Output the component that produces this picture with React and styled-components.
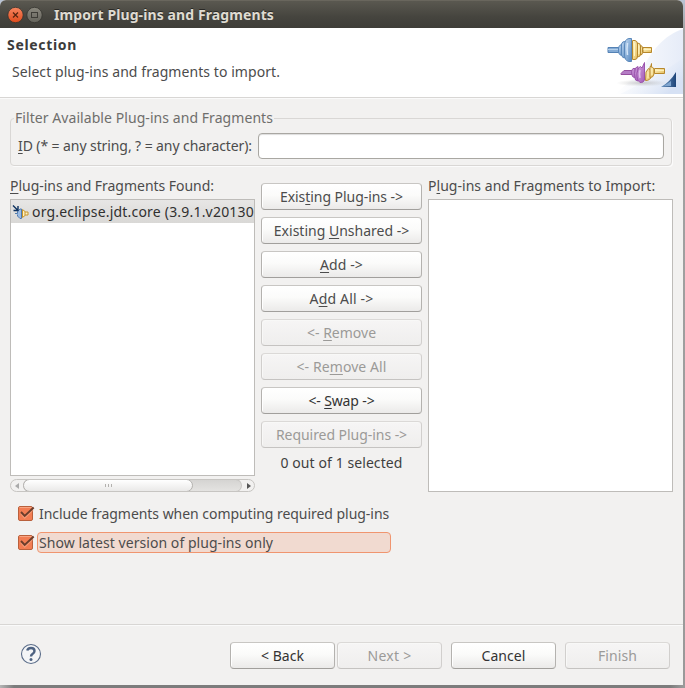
import React from 'react';
import styled, { createGlobalStyle } from 'styled-components';

const GlobalStyle = createGlobalStyle`
  * { box-sizing: border-box; }
  body {
    margin: 0;
    background: #c9c7c4;
    color: #4c4c4c;
    font: 14px/20px "Noto Sans", "Open Sans", sans-serif;
    overflow: hidden;
  }
  u { text-decoration-thickness: 1px; text-underline-offset: 2px; text-decoration-skip-ink: none; }
`;

const Desktop = styled.div`
  width: 685px;
  height: 688px;
  padding: 0 2px 3px 0;
  background:
    linear-gradient(#b9c3d4 0, #a3a3a3 30px, #999 100%) 683px 0 / 2px 685px no-repeat,
    linear-gradient(90deg, #b5b5b5 0, #7c7c7c 14px, #7c7c7c 670px, #9a9a9a 683px) 0 100% / 100% 3px no-repeat,
    #b9c3d4;
`;

const Window = styled.div`
  width: 683px;
  height: 685px;
  display: flex;
  flex-direction: column;
  background: #f2f1f0;
  border-radius: 6px 6px 0 0;
  overflow: hidden;
`;

const Text = styled.span`
  letter-spacing: ${(p) => p.$spacing || 0}px;
  white-space: nowrap;
`;

const TitleBar = styled.header`
  flex: none;
  height: 28px;
  display: flex;
  align-items: center;
  padding: 0 0 0 7px;
  background: linear-gradient(#5a5850, #45443e 60%, #3e3d38);
  border-top: 1px solid #69665d;
  color: #dfdbd2;
  font-weight: bold;
  text-shadow: 0 -1px 0 #2a2925;
`;

const WindowControls = styled.svg`
  flex: none;
  width: 36px;
  height: 18px;
  margin-right: 11px;
`;

const Banner = styled.section`
  flex: none;
  height: 70px;
  display: flex;
  justify-content: space-between;
  background: #fff;
  border-bottom: 1px solid #d8d6d4;
`;

const BannerText = styled.div`
  display: flex;
  flex-direction: column;
  gap: 7px;
  padding: 7px 0 0 7px;
`;

const Heading = styled.h1`
  margin: 0;
  font-size: 14px;
  line-height: 20px;
  color: #3c3c3c;
`;

const Description = styled.p`
  margin: 0 0 0 5px;
`;

const BannerArt = styled.svg`
  width: 83px;
  height: 66px;
`;

const Body = styled.main`
  height: 526px;
  padding: 13px 10px 0;
  border-top: 1px solid #fafafa;
`;

const Group = styled.fieldset`
  height: 57px;
  margin: -3px 0 0;
  min-width: 0;
  width: 662px;
  padding: 6px 7px 0 6px;
  border: 1px solid #d9d7d5;
  border-radius: 4px;
  box-shadow: 1px 1px 0 #fbfbfb;
`;

const Legend = styled.legend`
  margin-left: -3px;
  padding: 0 1px;
  height: 18px;
  line-height: 18px;
  color: #6f6e6c;
`;

const Field = styled.label`
  display: flex;
  align-items: center;
  justify-content: space-between;
  padding-left: 1px;
`;

const Input = styled.input`
  width: 406px;
  height: 26px;
  padding: 0 6px;
  border: 1px solid #a9a7a2;
  border-radius: 4px;
  background: #fff;
  box-shadow: inset 0 1px 1px #ddd;
  outline: none;
`;

const Picker = styled.div`
  display: flex;
  align-items: flex-start;
  margin-top: 10px;
  height: 317px;
`;

const Column = styled.div`
  display: flex;
  flex-direction: column;
  width: 245px;
`;

const ColumnLabel = styled.div`
  height: 23px;
  line-height: 20px;
`;

const List = styled.div`
  height: ${(p) => p.$height}px;
  border: 1px solid #bebcb9;
  background: #fff;
  overflow: hidden;
`;

const ListItem = styled.div`
  display: flex;
  align-items: center;
  height: 23px;
  padding-left: 1px;
  gap: 3px;
  background: linear-gradient(#e7e6e5, #d9d8d6);
  color: #303030;
  overflow: hidden;
`;

const PluginIcon = styled.svg`
  flex: none;
  width: 17px;
  height: 16px;
`;

const ScrollBar = styled.div`
  display: flex;
  align-items: stretch;
  height: 13px;
  margin-top: 3px;
  border: 1px solid #c7c5c2;
  border-radius: 7px;
  background: #f2f1f0;
  overflow: hidden;
`;

const ScrollArrow = styled.div`
  display: flex;
  align-items: center;
  justify-content: center;
  width: 12px;
  svg { width: 5px; height: 6px; fill: ${(p) => (p.$end ? '#555' : '#aaa')}; }
`;

const ScrollTrack = styled.div`
  flex: 1;
  display: flex;
  margin: -1px 0;
  border: 1px solid #c7c5c2;
  border-left: 0;
  border-radius: 7px;
  background: linear-gradient(#d5d4d2, #e4e3e1);
`;

const ScrollThumb = styled.div`
  display: flex;
  align-items: center;
  justify-content: center;
  gap: 2px;
  width: 170px;
  margin: -1px 0;
  border: 1px solid #b4b2af;
  border-radius: 7px;
  background: linear-gradient(#fff, #eae9e8);
`;

const Grip = styled.i`
  width: 1px;
  height: 3px;
  background: #b3b1ae;
`;

const Actions = styled.div`
  display: flex;
  flex-direction: column;
  align-items: stretch;
  gap: 7px;
  width: 161px;
  margin: 7px 6px 0;
`;

const Button = styled.button`
  display: flex;
  align-items: center;
  justify-content: center;
  width: ${(p) => p.$width || 161}px;
  height: 27px;
  padding: 0;
  font: inherit;
  border: 1px solid;
  border-color: #c8c6c3 #b4b2af #a19f9c;
  border-radius: 4px;
  background: linear-gradient(#fff, #fbfbfa 45%, #ebeae9);
  box-shadow: inset 1px 1px 0 #fff;
  color: ${(p) => (p.$dark ? '#333' : '#4c4c4c')};
  &:disabled {
    color: #9b9a98;
    border-color: #dbd9d7 #d1cfcd #c5c3c1;
    background: linear-gradient(#f6f5f5, #efeeed);
    box-shadow: inset 1px 1px 0 #f8f8f7;
  }
`;

const Status = styled.div`
  text-align: center;
  margin-top: -2px;
  color: #3f3f3f;
`;

const Options = styled.div`
  display: flex;
  flex-direction: column;
  gap: 8px;
  padding: 10px 0 0 8px;
`;

const CheckRow = styled.label`
  display: flex;
  align-items: center;
  gap: 2px;
  height: 21px;
`;

const CheckMark = styled.svg`
  flex: none;
  width: 17px;
  height: 17px;
`;

const CheckLabel = styled.span`
  display: flex;
  align-items: center;
  height: 21px;
  padding: 0 1px;
  border: 1px solid transparent;
  ${(p) => (p.$focused ? 'width: 354px; border-color: #f0956f; border-radius: 4px; background: #f1dad0;' : '')}
`;

const Footer = styled.footer`
  display: flex;
  align-items: flex-start;
  height: 61px;
  padding: 17px 13px 0 20px;
  border-top: 1px solid #d8d6d4;
  box-shadow: inset 0 1px 0 #fafafa;
`;

const HelpIcon = styled.svg`
  width: 22px;
  height: 22px;
  margin-top: 1px;
  margin-right: auto;
`;

const ButtonPair = styled.div`
  display: flex;
  gap: ${(p) => p.$gap}px;
  margin-left: 9px;
`;

function Check({ label, spacing, focused }) {
  return (
    <CheckRow>
      <CheckMark viewBox="0 0 17 17">
        <rect x=".5" y="1.5" width="14" height="14" rx="1.5" fill="#f27d53" stroke="#b9603c" />
        <path d="M1.5 2.5 H13.5" stroke="#f8a482" />
        <path d="M3 8.3 L6.7 12.6 L15 4.5" fill="none" stroke="#f9ae8d" strokeWidth="2" opacity=".6" />
        <path d="M3 7 L6.7 11 L15.7 2.5" fill="none" stroke="#6b3d2b" strokeWidth="1.9" />
      </CheckMark>
      <CheckLabel $focused={focused}><Text $spacing={spacing}>{label}</Text></CheckLabel>
    </CheckRow>
  );
}

function PlugArt() {
  return (
    <BannerArt viewBox="600 28 83 66">
      <defs>
        <linearGradient id="sky" x1="0" y1="0" x2="1" y2=".6">
          <stop offset="0.1" stopColor="#fff" stopOpacity="0" /><stop offset="1" stopColor="#d6e1f4" />
        </linearGradient>
        <linearGradient id="beam" x1="0" y1="0" x2="1" y2="0">
          <stop offset="0" stopColor="#fff" /><stop offset="1" stopColor="#e6ecf8" />
        </linearGradient>
        <linearGradient id="blue" x1="0" y1="0" x2="1" y2="1">
          <stop offset="0" stopColor="#c2d9f1" /><stop offset="1" stopColor="#5688c0" />
        </linearGradient>
        <linearGradient id="gold" x1="0" y1="0" x2="1" y2="1">
          <stop offset="0" stopColor="#fff6cd" /><stop offset="1" stopColor="#e5bd5a" />
        </linearGradient>
        <linearGradient id="violet" x1="0" y1="0" x2="1" y2="1">
          <stop offset="0" stopColor="#d2a6df" /><stop offset="1" stopColor="#a45bb8" />
        </linearGradient>
        <linearGradient id="corner" x1="0" y1="0" x2="1" y2="0">
          <stop offset="0" stopColor="#6c95c2" /><stop offset="1" stopColor="#1d4478" />
        </linearGradient>
        <radialGradient id="shade"><stop offset="0" stopColor="#aaa" /><stop offset="1" stopColor="#bbb" stopOpacity="0" /></radialGradient>
      </defs>
      <path d="M683 29 C664 35 650 52 642 71 L615 94 H683Z" fill="url(#beam)" />
      <path d="M683 58 Q662 74 620 94 H683Z" fill="url(#sky)" />
      <ellipse cx="642" cy="83" rx="26" ry="3.5" fill="url(#shade)" opacity=".6" />

      <path d="M608 47.5 H619 V52.5 H608Z" fill="#84abd5" stroke="#5482b5" />
      <path d="M608 49.5 H619" stroke="#b4cfea" />
      <g fill="url(#blue)" stroke="#5a88bb">
        <path d="M623 44.5 Q619.5 44 618.5 48 V52 Q619.5 56 623 55.5Z" />
        <path d="M626 41.5 Q622 41 621.5 44 V55 Q622 58.5 626 58Z" />
        <path d="M631.5 38.5 H629 Q624.5 39 624.5 46 V54 Q624.5 61 629 61.5 H631.5Z" />
      </g>
      <path d="M627.5 43 Q626.5 49 627.5 55" fill="none" stroke="#d5e6f8" strokeWidth="1.5" />
      <g fill="url(#gold)" stroke="#b7882c">
        <path d="M632.5 40.5 H635 Q637.5 41 637.5 44 V56 Q637.5 59.5 635 59.5 H632.5Z" />
        <path d="M637.5 43 Q640.5 43 640.5 46 V54 Q640.5 57 637.5 57Z" />
        <path d="M640.5 45.5 Q642.5 45.5 642.5 48 V52.5 Q642.5 55 640.5 55Z" />
        <path d="M643 47.5 H651.5 V52.5 H643Z" />
      </g>
      <path d="M634.5 43 V56 M638.8 45.5 V54 M643.5 49.5 H651" stroke="#fff4c0" />

      <path d="M621 73.5 L624 70.5 H632 V74.5 H621Z" fill="#b47cc5" stroke="#96509f" />
      <g fill="url(#violet)" stroke="#9a54ac">
        <path d="M635 68.5 H633 Q630.5 71 632.5 76.5 L635 78Z" />
        <path d="M638 66.5 L635.5 68 Q633.5 73 635.5 80 L638 81Z" />
        <path d="M638.5 68 L640.5 66.5 L642 68 L644.5 62.5 V80 Q643.5 83 640 82.5 Q636.5 80 637 73Z" />
      </g>
      <path d="M640 70 Q639 74 640 78" fill="none" stroke="#dfbfe9" strokeWidth="1.5" />
      <g fill="url(#gold)" stroke="#b7882c">
        <path d="M646 72 L648.5 68.5 L650 69.5 L651.5 63.5 V76 Q650.5 80.5 645.5 80.5Z" />
        <path d="M650 66.5 Q653.5 67 654 69 V74 Q653.5 77.5 650 77.5Z" />
        <path d="M654.5 68.5 H664.5 V73.5 H654.5Z" />
      </g>
      <path d="M648 72 V78 M652 69 V75 M655 70.5 H664" stroke="#fff1b5" />
      <path d="M661 87 Q670 82 676 72 V87Z" fill="url(#corner)" />
      <path d="M664 86 L671 81 V86Z" fill="#7fa5cf" />
    </BannerArt>
  );
}

export default function App() {
  return (
    <>
      <GlobalStyle />
      <Desktop>
        <Window>
          <TitleBar>
            <WindowControls viewBox="0 0 36 18">
              <defs>
                <linearGradient id="close" x1="0" y1="0" x2="0" y2="1"><stop stopColor="#f68660" /><stop offset="1" stopColor="#df4b1c" /></linearGradient>
                <linearGradient id="maximize" x1="0" y1="0" x2="0" y2="1"><stop stopColor="#8a887e" /><stop offset="1" stopColor="#64635b" /></linearGradient>
              </defs>
              <circle cx="8.5" cy="9" r="7.7" fill="url(#close)" stroke="#35342f" strokeWidth=".8" />
              <path d="M6 6.5 L11 11.5 M11 6.5 L6 11.5" stroke="#55240f" strokeWidth="1.2" />
              <circle cx="27.5" cy="9" r="7.7" fill="url(#maximize)" stroke="#35342f" strokeWidth=".8" />
              <rect x="24.5" y="6.5" width="6" height="5" fill="none" stroke="#3d3c36" />
            </WindowControls>
            <Text $spacing={0.103}>Import Plug-ins and Fragments</Text>
          </TitleBar>

          <Banner>
            <BannerText>
              <Heading><Text $spacing={0.67}>Selection</Text></Heading>
              <Description><Text $spacing={0.07}>Select plug-ins and fragments to import.</Text></Description>
            </BannerText>
            <PlugArt />
          </Banner>

          <Body>
            <Group>
              <Legend><Text $spacing={0.065}>Filter Available Plug-ins and Fragments</Text></Legend>
              <Field>
                <Text $spacing={-0.09}><u>I</u>D (* = any string, ? = any character):</Text>
                <Input type="text" />
              </Field>
            </Group>

            <Picker>
              <Column>
                <ColumnLabel><Text $spacing={-0.03}><u>P</u>lug-ins and Fragments Found:</Text></ColumnLabel>
                <List $height={277}>
                  <ListItem>
                    <PluginIcon viewBox="0 0 17 16">
                      <path d="M3 9.5 H5.5 V7.5 L8 5 H9.5 V14.5 H8 L5.5 12 V10.5" fill="#9bbbe3" stroke="#4f7ab0" strokeWidth="1" />
                      <path d="M10.5 5.5 L13 7.5 V11.5 L10.5 13.5Z M13 8 H16 V11 H13" fill="#fff3c4" stroke="#c8962c" strokeWidth="1" />
                      <path d="M1 1.5 L5.5 6 M6 2 V6.5 H1.5" fill="none" stroke="#0d315f" strokeWidth="1.4" />
                    </PluginIcon>
                    <Text $spacing={0.2}>org.eclipse.jdt.core (3.9.1.v20130</Text>
                  </ListItem>
                </List>
                <ScrollBar>
                  <ScrollArrow><svg viewBox="0 0 5 6"><path d="M4 0 V6 L0 3Z" /></svg></ScrollArrow>
                  <ScrollTrack><ScrollThumb><Grip /><Grip /><Grip /></ScrollThumb></ScrollTrack>
                  <ScrollArrow $end><svg viewBox="0 0 5 6"><path d="M1 0 V6 L5 3Z" /></svg></ScrollArrow>
                </ScrollBar>
              </Column>

              <Actions>
                <Button><Text $spacing={-0.05}>Exis<u>t</u>ing Plug-ins -&gt;</Text></Button>
                <Button><Text>Existing <u>U</u>nshared -&gt;</Text></Button>
                <Button><Text $spacing={0.11}><u>A</u>dd -&gt;</Text></Button>
                <Button><Text $spacing={0.18}>A<u>d</u>d All -&gt;</Text></Button>
                <Button disabled><Text>&lt;- <u>R</u>emove</Text></Button>
                <Button disabled><Text $spacing={0.08}>&lt;- Re<u>m</u>ove All</Text></Button>
                <Button $dark><Text $spacing={-0.14}>&lt;- <u>S</u>wap -&gt;</Text></Button>
                <Button disabled><Text $spacing={-0.05}>Required Plug-ins -&gt;</Text></Button>
                <Status><Text $spacing={0.08}>0 out of 1 selected</Text></Status>
              </Actions>

              <Column>
                <ColumnLabel><Text $spacing={0.03}>P<u>l</u>ug-ins and Fragments to Import:</Text></ColumnLabel>
                <List $height={293} />
              </Column>
            </Picker>

            <Options>
              <Check label="Include fragments when computing required plug-ins" spacing={-0.04} />
              <Check label="Show latest version of plug-ins only" spacing={0.05} focused />
            </Options>
          </Body>

          <Footer>
            <HelpIcon viewBox="0 0 22 22">
              <circle cx="11" cy="11" r="9.5" fill="#f4f5f7" stroke="#596b88" strokeWidth="1.1" />
              <path d="M7.2 7.5 Q8 5 11 5 Q14.5 5 14.5 8 Q14.5 9.8 12.5 11 Q11 12 11 13.6" fill="none" stroke="#4d6282" strokeWidth="2.4" />
              <circle cx="11" cy="16.4" r="1.5" fill="#4d6282" />
            </HelpIcon>
            <ButtonPair $gap={2}>
              <Button $width={105} $dark><Text $spacing={0.03}>&lt; Back</Text></Button>
              <Button $width={105} disabled><Text $spacing={0.27}>Next &gt;</Text></Button>
            </ButtonPair>
            <ButtonPair $gap={9}>
              <Button $width={105} $dark><Text $spacing={0.07}>Cancel</Text></Button>
              <Button $width={105} disabled><Text $spacing={0.08}>Finish</Text></Button>
            </ButtonPair>
          </Footer>
        </Window>
      </Desktop>
    </>
  );
}
